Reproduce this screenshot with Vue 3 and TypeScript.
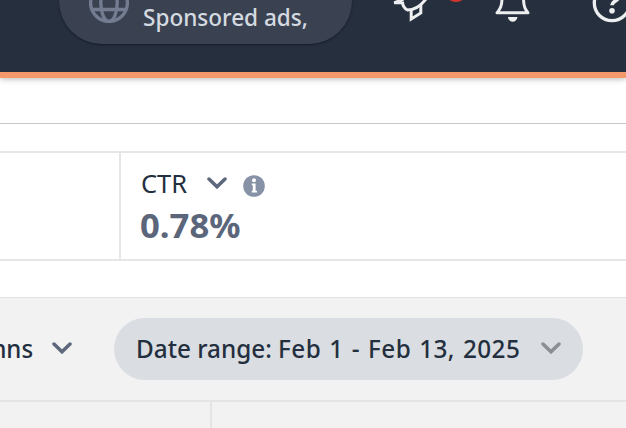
<script setup lang="ts">
import { ref } from 'vue'

interface Metric {
  name: string
  value: string
}

const metric = ref<Metric>({ name: 'CTR', value: '0.78%' })
const accountType = ref('Sponsored ads,')
const dateRange = ref('Feb 1 - Feb 13, 2025')
</script>

<template>
  <div class="page">
    <header class="topbar">
      <div class="account">
        <svg class="globe" viewBox="0 0 40 40" fill="none" stroke="currentColor" stroke-width="3.3">
          <circle cx="20" cy="20" r="18.4" />
          <ellipse cx="20" cy="20" rx="8.2" ry="18.4" />
          <path d="M3 13.5H37M3 26.5H37" />
        </svg>
        <span class="account-text"><span class="fit">{{ accountType }}</span></span>
      </div>
      <svg class="tools" viewBox="0 0 246 32" fill="none" stroke="#eceef0" stroke-width="3">
        <path d="M23.5 -1L14.2 2.8H22M22.5 1.5C22.5 5 24.5 8.5 27.5 10C34 10 41 5.5 46 -1" />
        <path d="M31.2 10.2V19L40.8 13V4.5" />
        <circle cx="76" cy="-9.5" r="11.5" fill="#d1362f" stroke="none" />
        <path d="M122 -2C122 7 119.5 9.5 117 12.8H148C145.5 9.5 143.5 7 143.5 -2" stroke-linejoin="round" />
        <path d="M128 17H137.5C137 20 135 21.8 132.7 21.8S128.4 20 128 17Z" fill="#eceef0" stroke="none" />
        <circle cx="232" cy="3" r="17.7" stroke-width="3.3" />
        <path d="M226 -3C226 -9 238.5 -9 238.5 -3C238.5 1 232 1 232 5.2" stroke-width="3.8" />
        <circle cx="232" cy="10.8" r="2.8" fill="#eceef0" stroke="none" />
      </svg>
    </header>

    <section class="metrics">
      <div class="metric-previous"></div>
      <div class="metric">
        <div class="metric-head">
          <span class="metric-name"><span class="fit">{{ metric.name }}</span></span>
          <svg class="chevron" viewBox="0 0 20 12"><path d="M2 2L10 9.8L18 2" /></svg>
          <svg class="info" viewBox="0 0 22 22">
            <circle cx="11" cy="11" r="10.8" fill="#8792a6" />
            <circle cx="11" cy="5.2" r="2" fill="#fff" />
            <path d="M8.8 8.5H12.6V15.8H14V17.5H8.8V15.8H9.8V10.2H8.8Z" fill="#fff" />
          </svg>
        </div>
        <div class="metric-value"><span class="fit">{{ metric.value }}</span></div>
      </div>
    </section>

    <section class="controls">
      <div class="columns-slot">
        <span class="columns-label"><span class="fit">Columns</span></span>
        <svg class="chevron" viewBox="0 0 20 12"><path d="M2 2L10 9.8L18 2" /></svg>
      </div>
      <button class="range" type="button">
        <span class="range-text"><span class="fit">Date range: <span class="dates">{{ dateRange }}</span></span></span>
        <svg class="chevron muted" viewBox="0 0 20 12"><path d="M2 2L10 9.8L18 2" /></svg>
      </button>
    </section>
    <div class="table-head">
      <div class="head-cell"></div>
    </div>
  </div>
</template>

<style>
body {
  background: #fff;
  overflow: hidden;
}
</style>

<style scoped>
.page {
  width: 626px;
  height: 428px;
  overflow: hidden;
  display: flex;
  flex-direction: column;
  font-family: "Noto Sans", "Open Sans", sans-serif;
  color: #232f3e;
}
.page * {
  box-sizing: border-box;
}
.topbar {
  flex: none;
  height: 78px;
  display: flex;
  align-items: flex-start;
  background: #262f3d;
  border-bottom: 6px solid #f4996c;
  box-shadow: 0 1px 6px rgba(0, 0, 0, 0.28);
  padding-left: 59px;
}
.account {
  flex: none;
  width: 293px;
  height: 86px;
  margin-top: -42px;
  display: flex;
  align-items: flex-end;
  background: #3a4252;
  border-radius: 43px;
  box-shadow: 0 1px 2px #151d29;
  padding: 0 0 21px 30px;
}
.globe {
  flex: none;
  width: 40px;
  height: 40px;
  color: #737c90;
}
.account-text {
  width: 165px;
  margin: 0 0 -10px 14px;
  font-size: 24px;
  line-height: 32px;
  font-weight: 500;
  color: #d5dae1;
}
.fit {
  display: inline-block;
  white-space: nowrap;
  transform-origin: left center;
}
.account-text .fit {
  transform: scaleX(0.94);
}
.tools {
  flex: none;
  width: 246px;
  height: 32px;
  margin-left: 28px;
}
.metrics {
  flex: none;
  height: 138px;
  margin-top: 45px;
  border-top: 1px solid #c8c8c8;
  padding-top: 27px;
  display: flex;
}
.metric-previous {
  width: 119px;
  height: 110px;
  border: solid #e6e6e6;
  border-width: 2px 0;
}
.metric {
  flex: 1;
  height: 110px;
  border: 2px solid #e6e6e6;
  border-right: 0;
  padding: 14px 0 0 20px;
}
.metric-head {
  display: flex;
  align-items: center;
  height: 32px;
}
.metric-name {
  width: 46px;
  font-size: 25px;
  line-height: 32px;
  font-weight: 450;
}
.metric-name .fit {
  transform: scaleX(1.02);
}
.chevron {
  flex: none;
  width: 20px;
  height: 12px;
  fill: none;
  stroke: #5e687c;
  stroke-width: 3.5;
  stroke-linecap: round;
}
.metric-head .chevron {
  margin-left: 20px;
}
.info {
  width: 22px;
  height: 22px;
  margin: 6px 0 0 16px;
}
.metric-value {
  font-size: 34px;
  line-height: 48px;
  font-weight: 700;
  color: #5c667a;
  margin-top: 2px;
}
.metric-value .fit {
  transform: translateX(-1px) scaleX(1.02);
}
.controls {
  flex: none;
  height: 105px;
  margin-top: 36px;
  background: #f2f2f2;
  border-top: 1px solid #e2e2e2;
  border-bottom: 2px solid #e4e4e4;
  display: flex;
  padding-top: 20px;
}
.columns-slot {
  width: 114px;
  height: 62px;
  display: flex;
  align-items: center;
}
.columns-label {
  width: 33px;
  display: flex;
  justify-content: flex-end;
  font-size: 25px;
  font-weight: 500;
  margin-top: -2px;
}
.columns-label .fit {
  transform-origin: right center;
  transform: scaleX(0.96);
}
.columns-slot .chevron {
  margin: -2px 0 0 19px;
}
.range {
  width: 469px;
  height: 62px;
  border: 0;
  border-radius: 31px;
  background: #dadde1;
  display: flex;
  align-items: center;
  padding: 0 0 0 22px;
  font: inherit;
  color: inherit;
}
.range-text {
  width: 385px;
  text-align: left;
  font-size: 25px;
  font-weight: 500;
  margin-top: -2px;
}
.range-text .fit {
  transform: scaleX(0.972);
}
.dates {
  letter-spacing: 0.4px;
  word-spacing: 1.5px;
}
.range .chevron {
  margin: -2px 0 0 20px;
}
.muted {
  stroke: #8b8e92;
}
.table-head {
  flex: 1;
  background: #f2f2f2;
}
.head-cell {
  width: 212px;
  height: 100%;
  border-right: 2px solid #e4e4e4;
}
</style>
